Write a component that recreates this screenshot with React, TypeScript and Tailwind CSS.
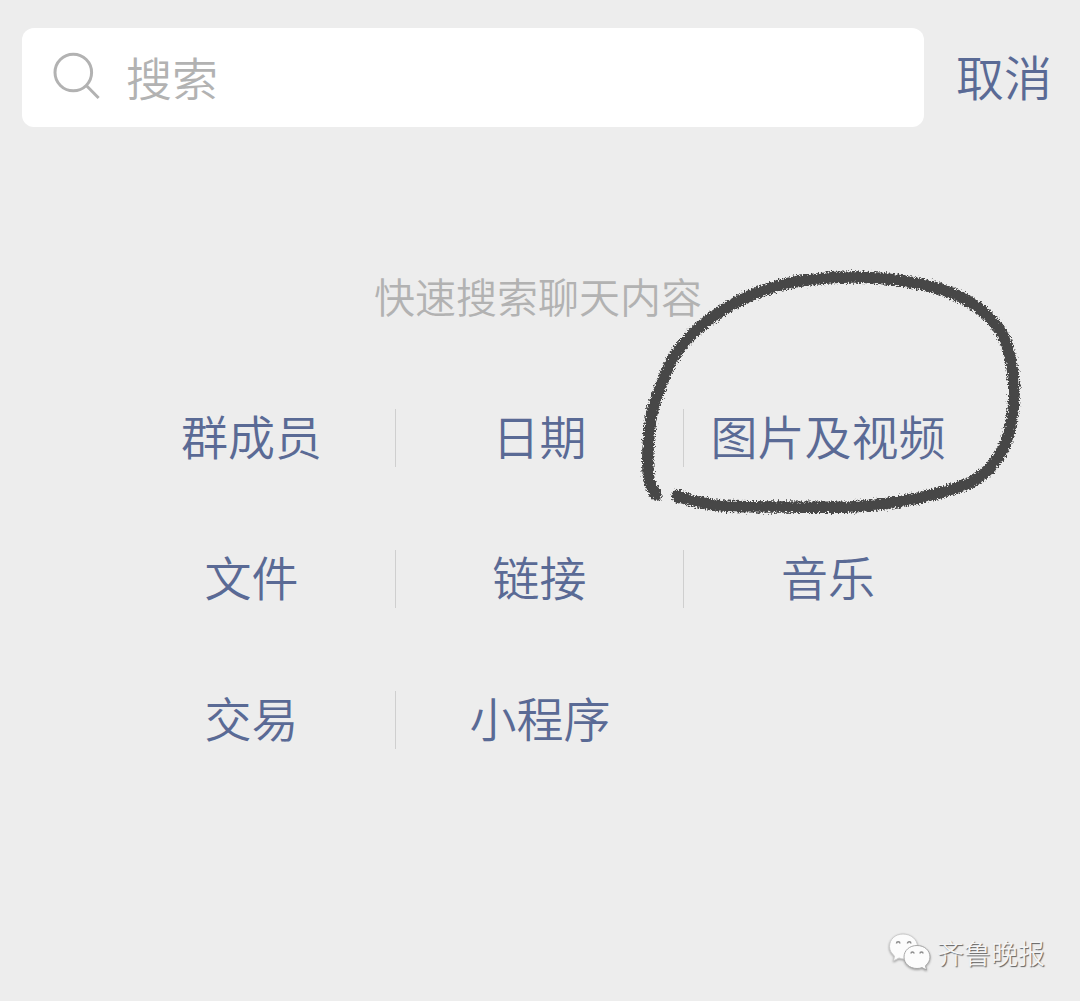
import React, { useState } from 'react';

const HIGHLIGHTED = '图片及视频';

const FILTERS = ['群成员', '日期', '图片及视频', '文件', '链接', '音乐', '交易', '小程序'];

type Point = [number, number];

const LOOP_POINTS: Point[] = [
  [28, 237], [21, 221], [20, 192], [24, 155], [34, 125], [47, 97], [72, 69], [109, 44], [149, 28],
  [189, 21], [229, 19], [275, 23], [315, 32], [345, 46], [369, 68], [381, 94], [386, 132], [383, 165],
  [373, 195], [349, 221], [315, 234], [269, 244], [222, 249], [159, 249], [95, 248], [66, 243], [50, 238],
];

// Catmull-Rom spline through the given points, as cubic beziers
const smoothPath = (points: Point[]) => {
  let d = `M${points[0].join(' ')}`;
  for (let i = 0; i < points.length - 1; i++) {
    const p0 = points[i - 1] || points[i];
    const p1 = points[i];
    const p2 = points[i + 1];
    const p3 = points[i + 2] || p2;
    d += `C${p1[0] + (p2[0] - p0[0]) / 6} ${p1[1] + (p2[1] - p0[1]) / 6}`;
    d += ` ${p2[0] - (p3[0] - p1[0]) / 6} ${p2[1] - (p3[1] - p1[1]) / 6}`;
    d += ` ${p2[0]} ${p2[1]}`;
  }
  return d;
};

const SearchIcon: React.FC = () => (
  <svg className="h-[52px] w-12 shrink-0" viewBox="0 0 48 52" fill="none" stroke="#b2b2b2" strokeWidth="3" aria-hidden="true">
    <circle cx="21.3" cy="20.5" r="18.3" />
    <path d="M34.3 33.5L46.6 46" />
  </svg>
);

// Hand-drawn loop around a single filter
const MarkerLoop: React.FC = () => (
  <svg
    className="pointer-events-none absolute top-1/2 left-1/2 h-[270px] w-[400px] -translate-x-1/2 -translate-y-[180px]"
    viewBox="0 0 400 270"
    fill="none"
    aria-hidden="true"
  >
    <filter id="crayon" x="-5%" y="-5%" width="110%" height="110%">
      <feTurbulence type="fractalNoise" baseFrequency="0.6" numOctaves="2" seed="4" result="noise" />
      <feDisplacementMap in="SourceGraphic" in2="noise" scale="7" xChannelSelector="R" yChannelSelector="G" />
      <feGaussianBlur stdDeviation="0.7" />
    </filter>
    <g filter="url(#crayon)" stroke="#464646" strokeLinecap="round" strokeLinejoin="round">
      <path strokeWidth="11.5" d={smoothPath(LOOP_POINTS)} />
      <path strokeWidth="13" d="M50 238L51 239" />
    </g>
  </svg>
);

const WechatLogo: React.FC = () => (
  <svg className="h-10 w-11 drop-shadow-[0_1px_1px_#9a9a9a]" viewBox="0 0 44 40" aria-hidden="true">
    <g fill="#fcfcfc" stroke="#cccccc" strokeWidth="1">
      <path d="M14 1C6 1 0.5 6.5 0.5 13.5C0.5 17.5 2.5 20.5 5.5 23L4.5 28L10 25C12 25.7 13 26 15 26C23 26 28.5 20.5 28.5 13.5C28.5 6.5 22 1 14 1Z" />
      <path stroke="#a8a8a8" d="M28 12.5C20.5 12.5 15 17.5 15 24C15 30.5 20.5 35.5 28 35.5C30 35.5 31.5 35.2 33 34.6L37.5 37L36.5 32.7C39.2 30.5 41 27.5 41 24C41 17.5 35.5 12.5 28 12.5Z" />
    </g>
    <g fill="none" stroke="#8c8c8c" strokeWidth="1.5">
      <path d="M7.5 10.5A1.7 1.7 0 0 1 10.9 10.5" />
      <path d="M18.5 10.5A1.7 1.7 0 0 1 21.9 10.5" />
      <path d="M22 20.5A1.5 1.5 0 0 1 25 20.5" />
      <path d="M31 20.5A1.5 1.5 0 0 1 34 20.5" />
    </g>
  </svg>
);

const App: React.FC = () => {
  const [query, setQuery] = useState('');

  return (
    <main className="flex min-h-screen flex-col bg-[#ededed] font-['Noto_Sans_CJK_SC',sans-serif] font-[350] text-[#5a6a95]">
      <header className="flex items-center gap-8 pt-7 pr-7 pl-[22px]">
        <label className="flex h-[99px] min-w-0 flex-1 items-center gap-[26px] rounded-xl bg-white pl-[30px]">
          <SearchIcon />
          <input
            type="text"
            aria-label="搜索"
            placeholder="搜索"
            value={query}
            onChange={e => setQuery(e.target.value)}
            className="h-full min-w-0 flex-1 bg-transparent pb-1 text-[46px] text-gray-800 outline-none placeholder:text-[#b2b2b2]"
          />
        </label>
        <button type="button" className="shrink-0 pb-1.5 text-5xl" onClick={() => setQuery('')}>
          取消
        </button>
      </header>

      <p className="mt-[138px] pr-1 text-center text-[41px] leading-[60px] text-[#b2b2b2]">快速搜索聊天内容</p>

      <nav className="mt-[84px] grid grid-cols-3 gap-y-[83px] px-[10%]">
        {FILTERS.map((item, i) => {
          const divided = i % 3 !== 2 && i < FILTERS.length - 1;
          return (
            <div
              key={item}
              className={`relative flex h-[58px] items-center justify-center ${divided ? 'border-r border-[#cfcfcf]' : ''}`}
            >
              <button type="button" className="pb-1.5 text-[47px] leading-[58px] whitespace-nowrap">
                {item}
              </button>
              {item === HIGHLIGHTED && <MarkerLoop />}
            </div>
          );
        })}
      </nav>

      <footer className="mt-auto flex items-center justify-end gap-1 pr-[35px] pb-7">
        <WechatLogo />
        <span className="text-[27px] leading-10 text-[#f4f4f4] [text-shadow:1px_1px_1px_#606060]">齐鲁晚报</span>
      </footer>
    </main>
  );
};

export default App;
